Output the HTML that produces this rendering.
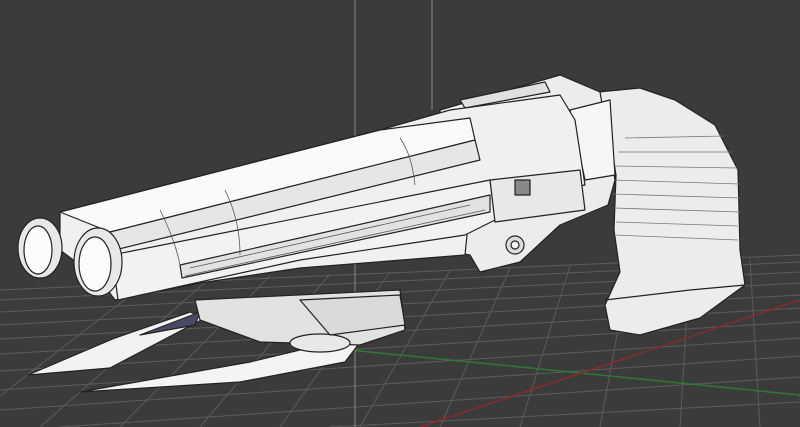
<!DOCTYPE html>
<html><head><style>
html,body{margin:0;padding:0;background:#3b3b3b;overflow:hidden}
svg{display:block}
</style></head><body>
<svg width="800" height="427" viewBox="0 0 800 427" xmlns="http://www.w3.org/2000/svg">
<rect width="800" height="427" fill="#3b3b3b"/>
<g stroke="#5c5c5c" stroke-width="1" fill="none">
<path d="M0 290 L800 255 M0 300 L800 262 M0 312 L800 272 M0 325 L800 283 M0 339 L800 295 M0 354 L800 308 M0 371 L800 322 M0 390 L800 338 M0 410 L800 356 M60 427 L800 377 M330 427 L800 402"/>
<path d="M-40 427 L150 280 M40 427 L210 278 M120 427 L270 276 M200 427 L330 274 M280 427 L390 272 M360 427 L450 270 M440 427 L510 268 M520 427 L570 266 M600 427 L630 264 M680 427 L690 262 M760 427 L750 260 M800 400 L810 258"/>
</g>
<path d="M300 345 L800 395" stroke="#2f7a2f" stroke-width="1.5"/>
<path d="M420 427 L800 300" stroke="#8a2b2b" stroke-width="1.5"/>
<line x1="355" y1="0" x2="355" y2="427" stroke="#8a8a8a"/>
<line x1="432" y1="0" x2="432" y2="110" stroke="#8a8a8a"/>
<g stroke="#222" stroke-width="1.2" stroke-linejoin="round">
<path d="M28 375 L115 338 L190 312 L205 318 L110 368 Z" fill="#f2f2f2"/>
<path d="M80 392 L250 362 L350 338 L358 345 L345 362 L240 382 Z" fill="#f4f4f4"/>
<path d="M140 335 L200 312 L195 325 Z" fill="#4a4a66"/>
<path d="M195 300 L400 290 L405 330 L360 345 L260 342 L200 320 Z" fill="#e2e2e2"/>
<ellipse cx="320" cy="343" rx="30" ry="9" fill="#e8e8e8"/>
<path d="M300 300 L400 295 L405 325 L330 335 Z" fill="#dadada"/>
<!-- grip -->
<path d="M598 92 L640 88 L675 100 L715 125 L738 170 L740 250 L745 285 L700 318 L640 335 L610 330 L605 305 L620 272 L614 230 L616 175 L608 125 Z" fill="#ececec"/>
<path d="M614 235 L738 240 M616 222 L738 226 M614 208 L740 212 M613 194 L740 198 M612 180 L740 184 M614 166 L738 168 M618 152 L732 152 M625 138 L724 136" stroke="#777" stroke-width="0.8" fill="none"/>
<path d="M605 300 L690 290 L745 285" fill="none"/>
<!-- receiver -->
<path d="M440 110 L560 75 L600 92 L615 180 L608 205 L560 225 L520 262 L480 272 L470 255 L440 250 Z" fill="#ececec"/>
<path d="M460 100 L545 82 L550 92 L465 108 Z" fill="#e0e0e0"/>
<path d="M570 110 L610 100 L615 175 L585 180 Z" fill="#f6f6f6"/>
<circle cx="515" cy="245" r="9" fill="#dcdcdc"/>
<circle cx="515" cy="245" r="4" fill="#f4f4f4"/>
<!-- body -->
<path d="M60 212 L380 130 L450 110 L560 95 L575 120 L585 185 L470 205 L465 255 L300 268 L200 283 L115 300 L100 280 L60 250 Z" fill="#f0f0f0"/>
<path d="M60 212 L380 130 L470 118 L475 140 L110 232 Z" fill="#fafafa"/>
<path d="M110 232 L475 140 L480 160 L115 250 Z" fill="#e6e6e6"/>
<path d="M112 255 L490 180 L495 220 L465 235 L300 260 L118 300 Z" fill="#f2f2f2"/>
<path d="M180 265 L490 195 L490 212 L182 278 Z" fill="#e2e2e2"/>
<path d="M190 268 L470 205 M185 276 L485 210" stroke="#555" stroke-width="0.8" fill="none"/>
<path d="M490 180 L580 170 L585 210 L495 222 Z" fill="#e8e8e8"/>
<path d="M515 180 L530 180 L530 195 L515 195 Z" fill="#888"/>
<ellipse cx="40" cy="248" rx="22" ry="30" fill="#e8e8e8"/>
<ellipse cx="38" cy="250" rx="14" ry="24" fill="#fcfcfc"/>
<ellipse cx="98" cy="262" rx="24" ry="34" fill="#e8e8e8"/>
<ellipse cx="95" cy="264" rx="16" ry="27" fill="#fcfcfc"/>
<path d="M160 210 Q175 240 180 265 M225 190 Q240 220 240 255 M400 138 Q412 155 415 185" fill="none" stroke="#555" stroke-width="0.8"/>
</g>
</svg>
</body></html>
